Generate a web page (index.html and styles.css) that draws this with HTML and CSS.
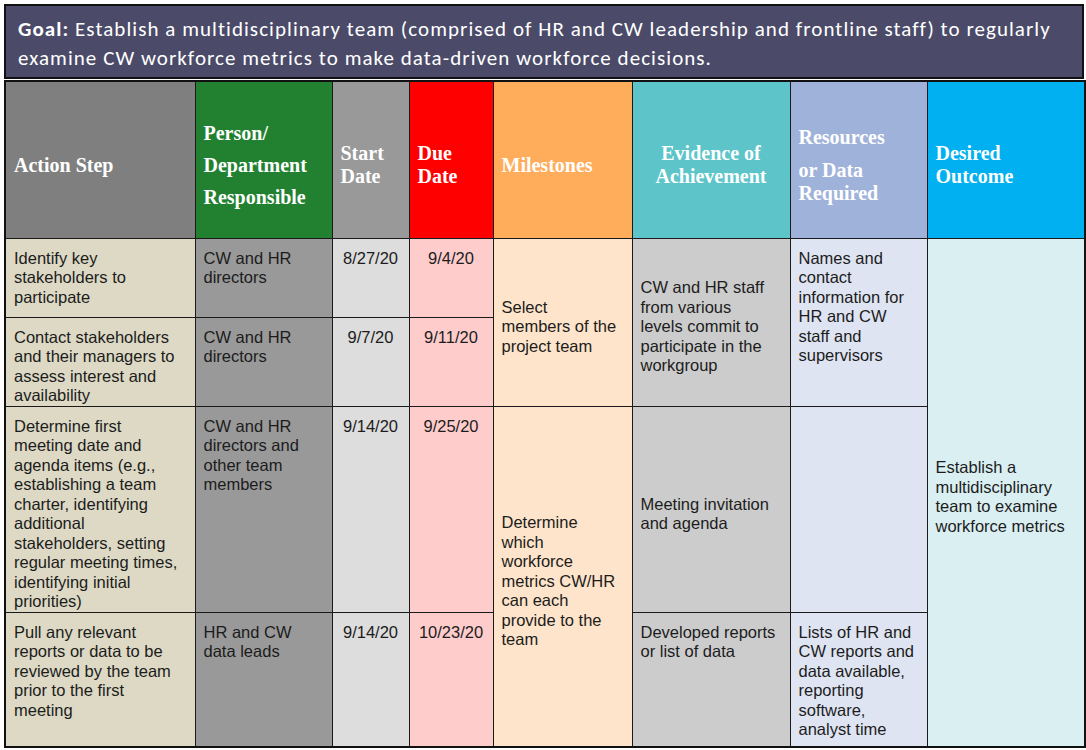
FILE: index.html
```html
<!DOCTYPE html>
<html lang="en">
<head>
<meta charset="utf-8">
<title>Action Plan</title>
<link rel="stylesheet" href="styles.css">
</head>
<body>
<div class="page">
  <div class="goal"><b>Goal:</b> Establish a multidisciplinary team (comprised of HR and CW leadership and frontline staff) to regularly examine CW workforce metrics to make data-driven workforce decisions.</div>
  <table class="plan">
    <colgroup>
      <col class="w-action">
      <col class="w-person">
      <col class="w-start">
      <col class="w-due">
      <col class="w-mile">
      <col class="w-evid">
      <col class="w-res">
      <col class="w-out">
    </colgroup>
    <thead>
      <tr class="head">
        <th class="h-action">Action Step</th>
        <th class="h-person">Person/ Department Responsible</th>
        <th class="h-start">Start Date</th>
        <th class="h-due">Due Date</th>
        <th class="h-mile">Milestones</th>
        <th class="h-evid">Evidence of Achievement</th>
        <th class="h-res"><span class="res-first">Resources</span><span class="res-rest">or Data Required</span></th>
        <th class="h-out">Desired Outcome</th>
      </tr>
    </thead>
    <tbody>
      <tr class="r1">
        <td class="c-action">Identify key stakeholders to participate</td>
        <td class="c-person">CW and HR directors</td>
        <td class="c-start">8/27/20</td>
        <td class="c-due">9/4/20</td>
        <td class="c-mile mid" rowspan="2">Select members of the project team</td>
        <td class="c-evid mid" rowspan="2">CW and HR staff from various levels commit to participate in the workgroup</td>
        <td class="c-res" rowspan="2">Names and contact information for HR and CW staff and supervisors</td>
        <td class="c-out mid" rowspan="4">Establish a multidisciplinary team to examine workforce metrics</td>
      </tr>
      <tr class="r2">
        <td class="c-action">Contact stakeholders and their managers to assess interest and availability</td>
        <td class="c-person">CW and HR directors</td>
        <td class="c-start">9/7/20</td>
        <td class="c-due">9/11/20</td>
      </tr>
      <tr class="r3">
        <td class="c-action">Determine first meeting date and agenda items (e.g., establishing a team charter, identifying additional stakeholders, setting regular meeting times, identifying initial priorities)</td>
        <td class="c-person">CW and HR directors and other team members</td>
        <td class="c-start">9/14/20</td>
        <td class="c-due">9/25/20</td>
        <td class="c-mile mid" rowspan="2">Determine which workforce metrics CW/HR can each provide to the team</td>
        <td class="c-evid mid">Meeting invitation and agenda</td>
        <td class="c-res"></td>
      </tr>
      <tr class="r4">
        <td class="c-action">Pull any relevant reports or data to be reviewed by the team prior to the first meeting</td>
        <td class="c-person">HR and CW data leads</td>
        <td class="c-start">9/14/20</td>
        <td class="c-due">10/23/20</td>
        <td class="c-evid">Developed reports or list of data</td>
        <td class="c-res">Lists of HR and CW reports and data available, reporting software, analyst time</td>
      </tr>
    </tbody>
  </table>
</div>
</body>
</html>
```

FILE: styles.css
```css
html, body {
  margin: 0;
  background: #ffffff;
}

body {
  padding: 4px 0 0 4px;
}

.page {
  width: 1080px;
}

.goal {
  background: #4b4b69;
  color: #ffffff;
  border: 2px solid #111111;
  font-family: "Carlito", "Lato", "Liberation Sans", sans-serif;
  font-size: 21px;
  letter-spacing: 1.05px;
  line-height: 29px;
  padding: 9px 8px 4px 12px;
}

.goal b {
  font-weight: 700;
}

.plan {
  margin-top: 1px;
  width: 1080px;
  table-layout: fixed;
  border-collapse: collapse;
  border: 2px solid #111111;
}

.w-action { width: 190px; }
.w-person { width: 137px; }
.w-start { width: 77px; }
.w-due { width: 84px; }
.w-mile { width: 139px; }
.w-evid { width: 158px; }
.w-res { width: 137px; }
.w-out { width: 158px; }

.plan th,
.plan td {
  border: 1px solid #1a1a1a;
  vertical-align: top;
}

.plan th {
  color: #ffffff;
  font-family: "Liberation Serif", "Times New Roman", serif;
  font-weight: 700;
  font-size: 20px;
  line-height: 23px;
  text-align: left;
  vertical-align: middle;
  padding: 11px 8px 0 8px;
}

.head { height: 157px; }
.r1 { height: 79px; }
.r2 { height: 89px; }
.r3 { height: 205px; }
.r4 { height: 135px; }

.plan th.h-action { background: #7f7f7f; }
.plan th.h-person { background: #218130; line-height: 32px; }
.plan th.h-start { background: #999999; }
.plan th.h-due { background: #ff0000; }
.plan th.h-mile { background: #ffad5b; }
.plan th.h-evid { background: #5dc5ca; text-align: center; padding-left: 4px; padding-right: 4px; }
.plan th.h-res { background: #9fb2da; }
.plan th.h-out { background: #00b0f0; }

.res-first {
  display: block;
  margin-bottom: 10px;
}

.res-rest {
  display: block;
}

.plan td {
  color: #1c1c1c;
  font-family: "Liberation Sans", Arial, sans-serif;
  font-size: 16.5px;
  line-height: 19.5px;
  padding: 10px 8px 0 8px;
}

.plan td.mid {
  vertical-align: middle;
}

.plan td.c-action { background: #ddd9c4; padding-right: 14px; }
.plan td.c-person { background: #999999; }
.plan td.c-start { background: #dddddd; text-align: center; padding-left: 4px; padding-right: 4px; }
.plan td.c-due { background: #ffcccc; text-align: center; padding-left: 4px; padding-right: 4px; }
.plan td.c-mile { background: #fee4ca; padding-right: 14px; }
.plan td.c-evid { background: #cccccc; padding-right: 12px; }
.plan td.c-res { background: #dfe4f2; }
.plan td.c-out { background: #daeff2; }
```
